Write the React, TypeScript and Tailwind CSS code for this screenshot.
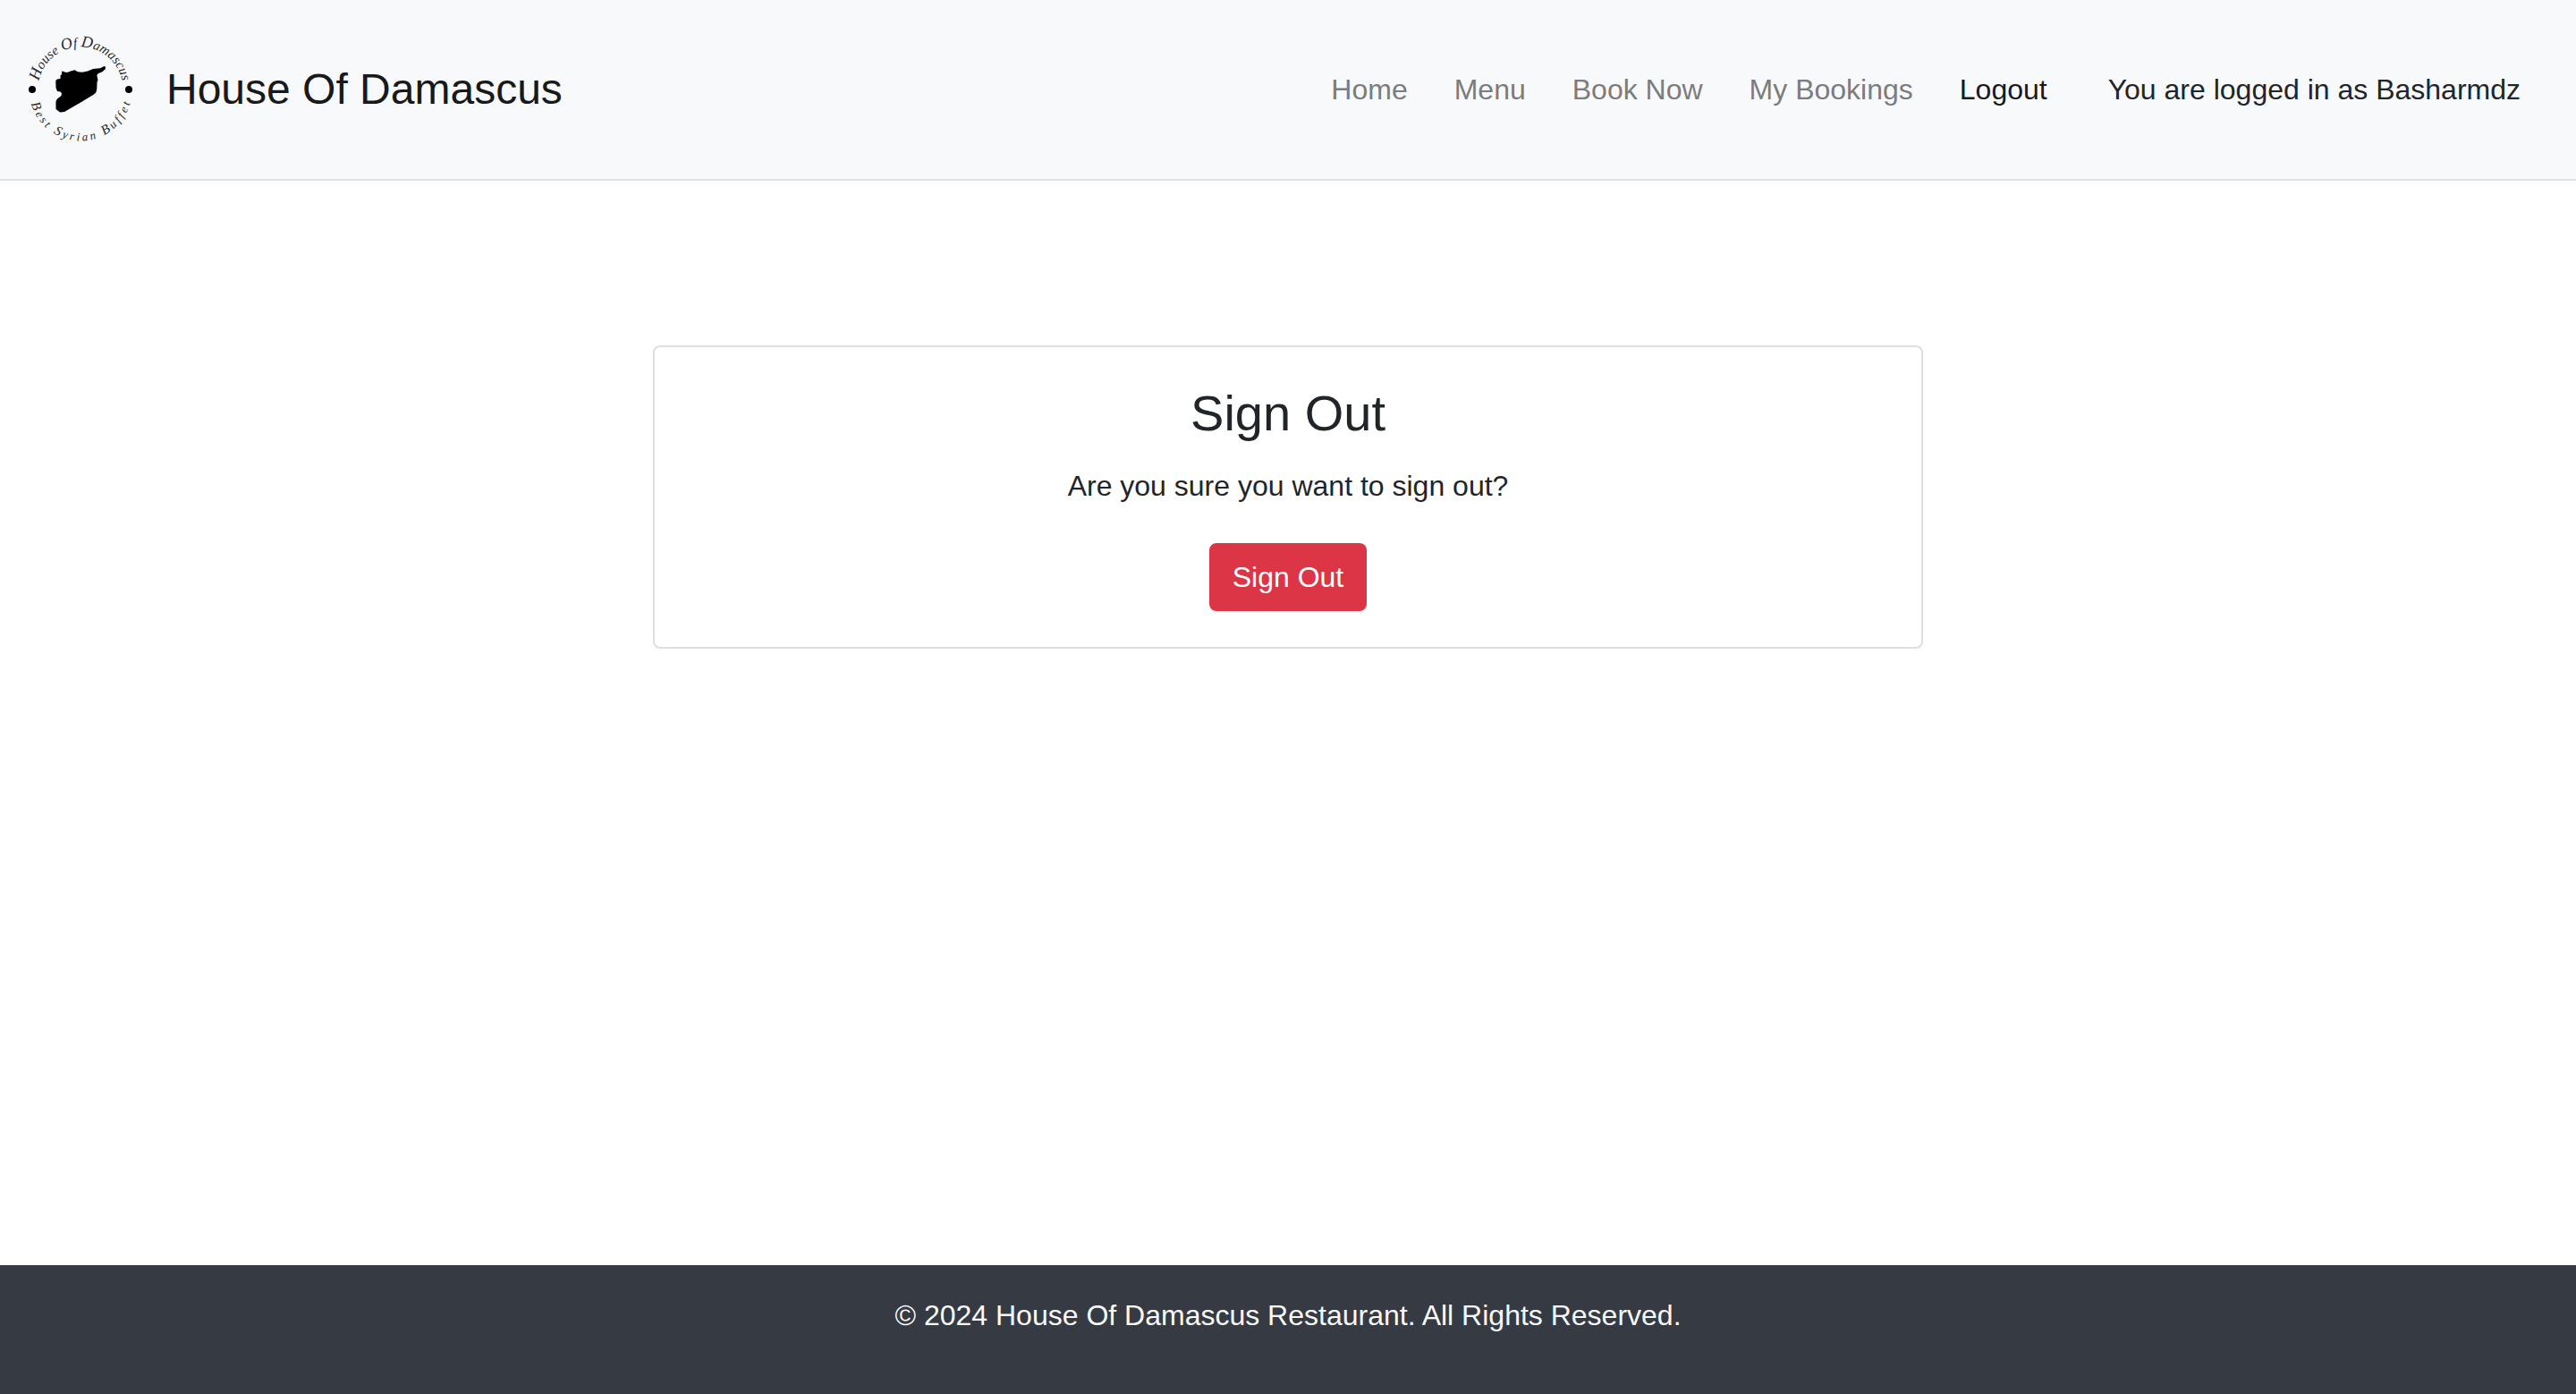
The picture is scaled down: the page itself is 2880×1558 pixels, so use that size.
const navLinks = ["Home", "Menu", "Book Now", "My Bookings"];

function Logo() {
  return (
    <svg className="size-[130px] shrink-0 overflow-visible" viewBox="25 35 130 130" role="img" aria-label="House Of Damascus logo">
      <defs>
        <path id="top-arc" d="M42.5 100 A47.5 47.5 0 0 1 137.5 100" fill="none" />
        <path id="bottom-arc" d="M32.5 100 A57.5 57.5 0 0 0 147.5 100" fill="none" />
      </defs>
      <g fill="#2a2a2a" fontFamily="Liberation Serif, serif" fontStyle="italic">
        <text fontSize="15">
          <textPath href="#top-arc" startOffset="9.5" textLength="130">
            <tspan fontSize="18">H</tspan>ouse <tspan fontSize="18">O</tspan>f <tspan fontSize="18">D</tspan>amascus
          </textPath>
        </text>
        <text fontSize="13">
          <textPath href="#bottom-arc" startOffset="16" textLength="149">
            <tspan fontSize="15">B</tspan>est <tspan fontSize="15">S</tspan>yrian <tspan fontSize="15">B</tspan>uffet
          </textPath>
        </text>
      </g>
      <circle cx="36" cy="100" r="4" />
      <circle cx="144" cy="100" r="4" />
      <path d="M70 79.5 L72 80.5 L75 81 L79 79.5 L83.5 78.3 L87 80.3 L92 80.8 L98 79.5 L104 77 L112 76.3 L116.5 74 L118.2 75 L117.5 77.5 L114 80.5 L110 82 L108.3 84 L109.5 89.5 L108.5 92 L108.3 99 L107.5 103 L105 105.5 L91 114 L72 125 L67 125.5 L62.5 122 L62.5 113 L64 110.5 L68.5 107 L69 104.5 L67.5 102.5 L64 102 L62.5 98 L62.3 90 L64 88.5 L67.5 88 L67.5 84.5 L69 83 L69 80 Z" />
    </svg>
  );
}

export default function App() {
  return (
    <div className="flex h-[1558px] flex-col bg-white font-['Liberation_Sans',Arial,sans-serif] text-[32px] leading-[48px] text-[#212529]">
      <header className="flex h-[202px] shrink-0 items-center justify-between border-b-2 border-[#dee2e6] bg-[#f8f9fb] pr-[62px] pl-[25px]">
        <a className="flex items-center gap-[31px] text-5xl leading-[72px] text-[#191919]">
          <Logo />
          <span>House Of Damascus</span>
        </a>
        <nav className="flex items-center">
          <ul className="flex items-center gap-[52px] text-[#7c7c7d]">
            {navLinks.map((label) => (
              <li key={label}>{label}</li>
            ))}
            <li className="text-[#191919]">Logout</li>
          </ul>
          <span className="ml-[68px]">You are logged in as Basharmdz</span>
        </nav>
      </header>

      <main className="flex grow justify-center pt-[184px]">
        <section className="flex h-[339px] w-[1420px] flex-col items-center rounded-lg border-2 border-[#dfdfdf] pt-10">
          <h1 className="text-[56px] leading-[67px]">Sign Out</h1>
          <p className="mt-6">Are you sure you want to sign out?</p>
          <button className="mt-10 h-[76px] w-44 rounded-lg bg-[#dc3545] text-white">Sign Out</button>
        </section>
      </main>

      <footer className="h-36 shrink-0 bg-[#363a42] pt-8 text-center text-[#f8f9fa]">
        © 2024 House Of Damascus Restaurant. All Rights Reserved.
      </footer>
    </div>
  );
}
